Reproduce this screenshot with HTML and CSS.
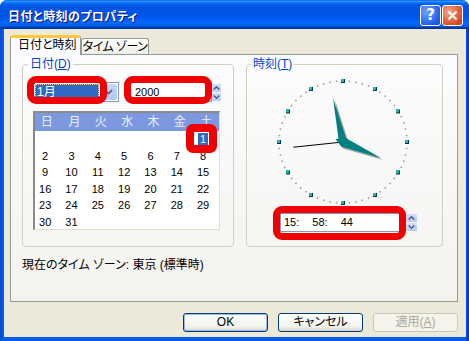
FILE: index.html
```html
<!DOCTYPE html>
<html lang="ja">
<head>
    <meta charset="UTF-8">
    <title>日付と時刻のプロパティ</title>
    <link rel="stylesheet" href="styles.css">
</head>
<body>
<div class="window">
    <div class="titlebar">
        <span class="title">日付と時刻のプロパティ</span>
        <div class="caption-buttons">
            <span class="cap help">?</span>
            <span class="cap close">
                <svg width="11" height="11" viewBox="0 0 11 11"><path d="M1.5 1.5 L9.5 9.5 M9.5 1.5 L1.5 9.5" stroke="#fff" stroke-width="2.2"/></svg>
            </span>
        </div>
    </div>

    <div class="client">
        <div class="tabs">
            <span class="tab active">日付と時刻</span>
            <span class="tab">タイム ゾーン</span>
        </div>

        <div class="panel">
            <div class="groups">
                <!-- date -->
                <fieldset class="group date-group">
                    <legend>日付(<u>D</u>)</legend>
                    <div class="date-row">
                        <div class="combo">
                            <span class="combo-value">1月</span>
                            <span class="combo-arrow">
                                <svg width="9" height="6" viewBox="0 0 9 6"><path d="M1 1.2 L4.5 4.6 L8 1.2" fill="none" stroke="#4D6185" stroke-width="1.8"/></svg>
                            </span>
                            <span class="mark month-mark"></span>
                        </div>
                        <div class="edit year-edit">
                            2000
                            <span class="mark year-mark"></span>
                        </div>
                        <span class="spin">
                            <span><svg width="7" height="4" viewBox="0 0 7 4"><path d="M0.7 3.5 L3.5 0.8 L6.3 3.5" fill="none" stroke="#4D6185" stroke-width="1.5"/></svg></span>
                            <span><svg width="7" height="4" viewBox="0 0 7 4"><path d="M0.7 0.5 L3.5 3.2 L6.3 0.5" fill="none" stroke="#4D6185" stroke-width="1.5"/></svg></span>
                        </span>
                    </div>
                    <div class="calendar">
                        <div class="cal-head">
                            <span>日</span><span>月</span><span>火</span><span>水</span><span>木</span><span>金</span><span>土</span>
                        </div>
                        <div class="cal-days">
                            <span></span><span></span><span></span><span></span><span></span><span></span><span><b class="today">1</b></span>
                            <span>2</span><span>3</span><span>4</span><span>5</span><span>6</span><span>7</span><span>8</span>
                            <span>9</span><span>10</span><span>11</span><span>12</span><span>13</span><span>14</span><span>15</span>
                            <span>16</span><span>17</span><span>18</span><span>19</span><span>20</span><span>21</span><span>22</span>
                            <span>23</span><span>24</span><span>25</span><span>26</span><span>27</span><span>28</span><span>29</span>
                            <span>30</span><span>31</span>
                        </div>
                        <span class="mark day-mark"></span>
                    </div>
                </fieldset>

                <!-- time -->
                <fieldset class="group time-group">
                    <legend>時刻(<u>T</u>)</legend>
                    <svg class="clock" width="140" height="134" viewBox="0 0 140 134">
                        <defs>
                            <g id="hm">
                                <rect x="-2" y="-2" width="4" height="4" fill="#003838"/>
                                <rect x="-2" y="-2" width="3" height="3" fill="#1FB5B5"/>
                            </g>
                        </defs>
                        <path d="M134 66 A64 61 0 1 1 6 66 A64 61 0 1 1 134 66" fill="none" stroke="#9A9A9A" stroke-width="1.6" pathLength="60" stroke-dasharray="0.22 0.78" stroke-dashoffset="0.11"/>
                        <use href="#hm" x="70" y="5"/>
                        <use href="#hm" x="102" y="13"/>
                        <use href="#hm" x="125" y="35.5"/>
                        <use href="#hm" x="134" y="66"/>
                        <use href="#hm" x="125" y="96.5"/>
                        <use href="#hm" x="102" y="119"/>
                        <use href="#hm" x="70" y="127"/>
                        <use href="#hm" x="38" y="119"/>
                        <use href="#hm" x="15" y="96.5"/>
                        <use href="#hm" x="6" y="66"/>
                        <use href="#hm" x="15" y="35.5"/>
                        <use href="#hm" x="38" y="13"/>
                        <!-- second hand -->
                        <line x1="20.3" y1="71.2" x2="72" y2="65.8" stroke="#000" stroke-width="1"/>
                        <!-- shadows -->
                        <g fill="#A4A4A4" transform="translate(2 2)">
                            <polygon points="60,22 73.9,65.1 71.3,71.9 66.1,66.9"/>
                            <polygon points="108,82 68.1,70.6 62.6,62.9 71.9,61.4"/>
                        </g>
                        <!-- minute and hour hands -->
                        <g fill="#008080">
                            <polygon points="60,22 73.9,65.1 71.3,71.9 66.1,66.9"/>
                            <polygon points="108,82 68.1,70.6 62.6,62.9 71.9,61.4"/>
                        </g>
                    </svg>
                    <div class="time-row">
                        <div class="edit time-edit">
                            15: 58: 44
                            <span class="mark time-mark"></span>
                        </div>
                        <span class="spin time-spin">
                            <span><svg width="7" height="4" viewBox="0 0 7 4"><path d="M0.7 3.5 L3.5 0.8 L6.3 3.5" fill="none" stroke="#4D6185" stroke-width="1.5"/></svg></span>
                            <span><svg width="7" height="4" viewBox="0 0 7 4"><path d="M0.7 0.5 L3.5 3.2 L6.3 0.5" fill="none" stroke="#4D6185" stroke-width="1.5"/></svg></span>
                        </span>
                    </div>
                </fieldset>
            </div>

            <p class="tz">現在のタイム ゾーン: 東京 (標準時)</p>
        </div>

        <div class="buttons">
            <button class="btn default">OK</button>
            <button class="btn">キャンセル</button>
            <button class="btn" disabled>適用(<u>A</u>)</button>
        </div>
    </div>
</div>
</body>
</html>
```

FILE: styles.css
```css
* {
    box-sizing: border-box;
}
body {
    margin: 0;
    background: #fff;
    font-family: "Liberation Sans", "Noto Sans CJK JP", sans-serif;
    font-size: 12px;
    font-feature-settings: "palt";
    color: #000;
}
.window {
    width: 469px;
    height: 341px;
    display: flex;
    flex-direction: column;
    background: linear-gradient(to right, #0046D8, #0A5CEB 3px, #0A5CEB 465px, #0030B8);
    border-radius: 7px 7px 0 0;
    overflow: hidden;
}

/* title bar */
.titlebar {
    height: 29px;
    flex: none;
    display: flex;
    align-items: center;
    justify-content: space-between;
    padding: 1px 6px 0 8px;
    background: linear-gradient(to bottom, #0058EE 0%, #3593FF 4%, #288EFF 6%, #127DFF 8%, #036FFC 10%, #0262EE 14%, #0057E5 20%, #0054E3 24%, #0055EB 56%, #005BF5 66%, #026AFE 76%, #0062EF 86%, #0052D6 92%, #0040AB 94%, #003092 100%);
}
.title {
    color: #fff;
    font-weight: bold;
    font-size: 12px;
    letter-spacing: 0.4px;
    text-shadow: 1px 1px #0F1089;
}
.caption-buttons {
    display: flex;
    gap: 1px;
}
.cap {
    width: 21px;
    height: 21px;
    border: 1px solid #fff;
    border-radius: 3px;
    display: flex;
    align-items: center;
    justify-content: center;
    color: #fff;
    font: bold 15px "DejaVu Sans", sans-serif;
}
.help {
    background: radial-gradient(circle at 30% 30%, #6FA6FF, #2663EE 65%, #1547C8);
}
.close {
    background: radial-gradient(circle at 30% 30%, #F6A688, #E2582F 60%, #C23A14);
}

/* client area */
.client {
    flex: 1;
    margin: 0 3px 4px 4px;
    background: #ECE9D8;
    padding: 6px 8px 0 6px;
    display: flex;
    flex-direction: column;
}
.tabs {
    display: flex;
    height: 20px;
    align-items: flex-end;
}
.tab {
    height: 17px;
    width: 68px;
    border: 1px solid #919B9C;
    border-bottom: none;
    border-radius: 3px 3px 0 0;
    background: linear-gradient(#fff, #ECEBE6);
    line-height: 16px;
    text-align: center;
    white-space: nowrap;
    letter-spacing: -0.5px;
}
.tab.active {
    width: 71px;
    height: 20px;
    position: relative;
    z-index: 1;
    background: #FCFCFE;
    border-top: 3px solid #FFC83C;
    padding: 0 0 3px 7px;
    line-height: 14px;
    text-align: left;
    letter-spacing: 0;
}
.panel {
    height: 248px;
    flex: none;
    margin-top: -1px;
    border: 1px solid #919B9C;
    background: linear-gradient(#FCFCFE, #F4F3EE);
    padding: 2px 0 0 11px;
}
.groups {
    display: flex;
    gap: 12px;
}
.group {
    margin: 0;
    padding: 0;
    border: 1px solid #D0D0BF;
    border-radius: 4px;
    height: 190px;
    min-width: 0;
}
.date-group {
    width: 212px;
}
.time-group {
    width: 197px;
}
legend {
    margin-left: 5px;
    padding: 0 2px;
    color: #0046D5;
    line-height: 14px;
}
.time-group legend {
    margin-left: 4px;
}

/* red marks laid over the controls */
.mark {
    position: absolute;
    border: 7px solid #F20000;
    border-radius: 9px;
}
.month-mark {
    left: -7px;
    top: -7px;
    width: 80px;
    height: 28px;
}
.year-mark {
    left: -7px;
    top: -7px;
    width: 88px;
    height: 28px;
}
.day-mark {
    left: 151px;
    top: 11px;
    width: 31px;
    height: 29px;
    border-width: 8px;
    border-radius: 7px;
}
.time-mark {
    left: -8px;
    top: -8px;
    width: 133px;
    height: 34px;
}

/* date controls */
.date-row {
    display: flex;
    align-items: center;
    margin: 11px 0 0 10px;
}
.combo {
    position: relative;
    width: 86px;
    height: 20px;
    border: 1px solid #7F9DB9;
    background: #fff;
    padding: 1px;
    display: flex;
}
.combo-value {
    flex: 1;
    background: #316AC5;
    color: #fff;
    border: 1px dotted #E9D79A;
    line-height: 14px;
    padding-left: 1px;
}
.combo-arrow {
    width: 17px;
    margin-left: 1px;
    background: linear-gradient(#CAD9FC, #B2C7F7);
    border-radius: 2px;
    display: flex;
    align-items: center;
    justify-content: center;
}
.edit {
    position: relative;
    height: 20px;
    border: 1px solid #7F9DB9;
    background: #fff;
    font-size: 11px;
    line-height: 18px;
}
.year-edit {
    width: 82px;
    margin-left: 11px;
    padding-left: 4px;
}
.spin {
    width: 9px;
    height: 17px;
    display: flex;
    flex-direction: column;
    gap: 1px;
}
.spin span {
    flex: 1;
    background: linear-gradient(#D2DEFA, #B9CCF6);
    border-radius: 1px;
    display: flex;
    align-items: center;
    justify-content: center;
}

/* month calendar */
.calendar {
    position: relative;
    margin: 9px 0 0 10px;
    width: 187px;
    height: 119px;
    background: #fff;
    border-top: 2px solid #8A8A8A;
    border-left: 2px solid #8A8A8A;
    border-right: 1px solid #E2E0D6;
    border-bottom: 1px solid #E2E0D6;
}
.cal-head,
.cal-days {
    display: grid;
    grid-template-columns: repeat(7, 26.33px);
    margin-left: -3px;
    text-align: center;
}
.cal-head {
    margin-left: 0;
    padding-left: 0;
    background: #7C99DF;
    color: #EAF0FC;
    height: 18px;
    line-height: 18px;
}
.cal-head span:first-child {
    margin-left: -3px;
}
.cal-days {
    grid-auto-rows: 16.5px;
    line-height: 16.5px;
    font-size: 11px;
}
.today {
    font-weight: normal;
    display: inline-block;
    background: #316AC5;
    color: #fff;
    line-height: 12px;
    padding: 0 2px;
}

/* time controls */
.clock {
    display: block;
    margin: 5px 0 0 26px;
}
.time-row {
    display: flex;
    align-items: center;
    margin: 3px 0 0 33px;
}
.time-edit {
    width: 126px;
    height: 19px;
    padding-left: 3px;
    line-height: 17px;
    word-spacing: 10px;
}
.time-spin {
    width: 11px;
}

.tz {
    margin: 11px 0 0;
    line-height: 14px;
}

/* dialog buttons */
.buttons {
    display: flex;
    justify-content: flex-end;
    gap: 10px;
    margin-top: 11px;
}
.btn {
    width: 85px;
    height: 19px;
    padding: 0;
    border: 1px solid #003C74;
    border-radius: 3px;
    background: linear-gradient(#FFFFFF, #F3F3EE 75%, #D8D3C8);
    font-family: "Liberation Sans", "Noto Sans CJK JP", sans-serif;
    font-size: 12px;
    font-feature-settings: "palt";
    line-height: 17px;
    color: #000;
}
.btn.default {
    box-shadow: inset 0 0 0 1px #9DB8EF;
}
.btn:disabled {
    border-color: #C9C7BA;
    background: #F5F4EA;
    color: #ACA899;
}
```
